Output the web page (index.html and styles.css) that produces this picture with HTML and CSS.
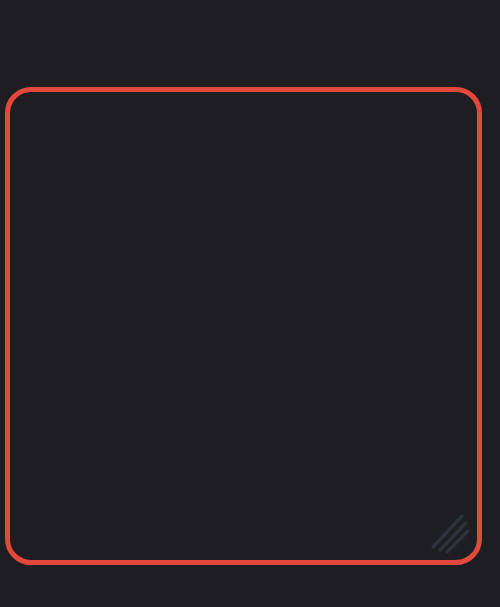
FILE: index.html
```html
<!DOCTYPE html>
<html>
<head>
<meta charset="utf-8">
<link rel="stylesheet" href="styles.css">
</head>
<body>
<div class="page">
  <div class="field">
    <svg class="grip" width="44" height="44" viewBox="0 0 44 44">
      <line x1="5" y1="37" x2="34" y2="6" />
      <line x1="12" y1="40" x2="38" y2="13" />
      <line x1="19" y1="42" x2="40" y2="21" />
    </svg>
  </div>
</div>
</body>
</html>
```
FILE: styles.css
```css
html, body {
  margin: 0;
  padding: 0;
  background: #1e1d22;
  width: 500px;
  height: 607px;
  overflow: hidden;
}
.page {
  padding: 87px 0 0 5px;
}
.field {
  position: relative;
  box-sizing: border-box;
  width: 477px;
  height: 478px;
  border: 5px solid #e2483c;
  border-radius: 26px;
}
.grip {
  position: absolute;
  right: 5px;
  bottom: 6px;
}
.grip line {
  stroke: #2e323c;
  stroke-width: 3.5;
  stroke-linecap: round;
}
```
